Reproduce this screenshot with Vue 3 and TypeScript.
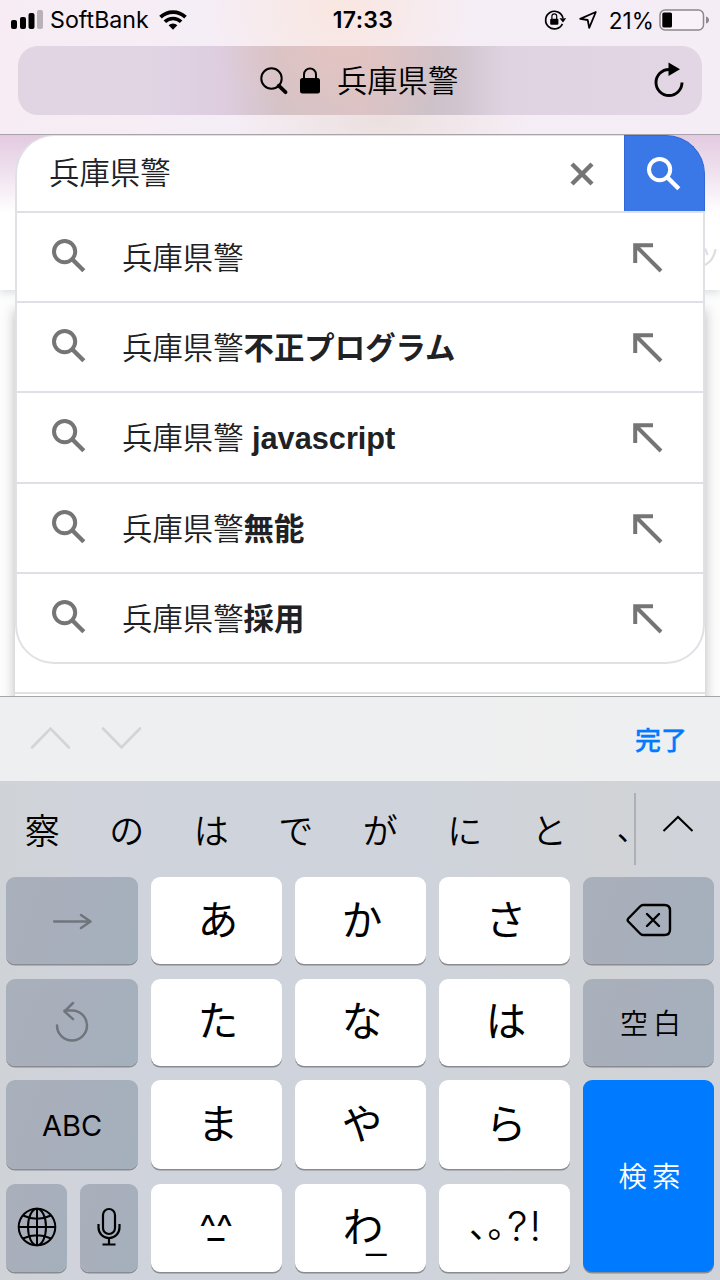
<script setup lang="ts">
interface Suggestion {
  base: string
  extra: string
  latin?: boolean
}

const query = '兵庫県警'

const suggestions: Suggestion[] = [
  { base: query, extra: '' },
  { base: query, extra: '不正プログラム' },
  { base: query + ' ', extra: 'javascript', latin: true },
  { base: query, extra: '無能' },
  { base: query, extra: '採用' },
]

const candidates: string[] = ['察', 'の', 'は', 'で', 'が', 'に', 'と']
</script>

<template>
  <div class="screen">
    <header class="browser">
      <div class="status">
        <div class="status-left">
          <svg class="signal" width="32" height="20" viewBox="0 0 32 20">
            <rect x="0" y="10" width="6" height="9" rx="2" />
            <rect x="9" y="7" width="6" height="12" rx="2" />
            <rect x="17.500" y="3" width="6" height="16" rx="2" />
            <rect x="26" y="0" width="6" height="19" rx="2" fill="#b8b1b8" />
          </svg>
          <span class="carrier">SoftBank</span>
          <svg class="wifi" width="28" height="20" viewBox="0 0 28 20">
            <g fill="none" stroke="#000" stroke-width="3.700">
              <path d="M1.500 7.100a18 18 0 0 1 25 0" />
              <path d="M5.900 11.800a11.600 11.600 0 0 1 16.200 0" />
            </g>
            <path d="M9.600 15.300a6.300 6.300 0 0 1 8.800 0L14 19.800z" />
          </svg>
        </div>
        <span class="clock">17:33</span>
        <div class="status-right">
          <svg width="23" height="22" viewBox="0 0 23 22">
            <path d="M18.400 14.900A8.800 8.800 0 1 1 19 9" fill="none" stroke="#000" stroke-width="1.700" />
            <path d="M15.500 9.300h6.700l-3.200 4.200z" />
            <rect x="6.200" y="9.700" width="8.200" height="6" rx="1" />
            <path d="M7.900 10V7.300a2.400 2.400 0 0 1 4.800 0V10" fill="none" stroke="#000" stroke-width="1.200" />
          </svg>
          <svg class="locate" width="20" height="20" viewBox="0 0 20 20">
            <path d="M17.800 2L2.200 8.800l7.500 1.200L11.200 17.800z" fill="none" stroke="#000" stroke-width="1.800" stroke-linejoin="round" />
          </svg>
          <span class="percent">21%</span>
          <svg class="battery" width="51" height="22" viewBox="0 0 51 22">
            <rect x="1" y="1" width="43.500" height="20" rx="5" fill="#f9f2f8" stroke="#8d888d" stroke-width="1.500" />
            <rect x="3.300" y="3.500" width="9.700" height="15" rx="1.500" />
            <path d="M47 7.500q3 1 3 3.500t-3 3.500z" fill="#8d888d" />
          </svg>
        </div>
      </div>
      <div class="address">
        <div class="address-main">
          <svg width="28" height="28" viewBox="0 0 28 28">
            <circle cx="11.500" cy="11.500" r="10.200" fill="none" stroke="#000" stroke-width="2" />
            <path d="M18.700 18.700l6.800 6.500" stroke="#000" stroke-width="3.700" stroke-linecap="round" />
          </svg>
          <svg class="lock" width="20" height="27" viewBox="0 0 20 27">
            <rect x="0" y="11" width="20" height="15.500" rx="2.500" />
            <path d="M4 12V7.500a6 6 0 0 1 12 0V12" fill="none" stroke="#000" stroke-width="2" />
          </svg>
          <span class="address-text">{{ query }}</span>
        </div>
        <svg class="reload" width="32" height="36" viewBox="0 0 32 36">
          <path d="M29 20.500A13 13 0 1 1 16 7.500" fill="none" stroke="#000" stroke-width="2.900" />
          <path d="M15.500 0.500v13.500L27 7.200z" />
        </svg>
      </div>
    </header>

    <main class="page">
      <div class="page-top"><span class="tab-fragment">ツ</span></div>
      <div class="page-card"></div>
      <section class="search">
        <div class="search-field">
          <span class="query">{{ query }}</span>
          <svg class="clear" width="24" height="24" viewBox="0 0 24 24">
            <path d="M2 2l20 20M22 2L2 22" stroke="#757575" stroke-width="4.400" />
          </svg>
          <div class="search-button">
            <svg width="34" height="34" viewBox="0 0 34 34" fill="none" stroke="#fff">
              <circle cx="12.600" cy="12.600" r="10.600" stroke-width="4" />
              <path d="M20.500 20.500l11.300 11.300" stroke-width="4.400" />
            </svg>
          </div>
        </div>
        <div v-for="(item, i) in suggestions" :key="i" class="suggestion">
          <svg class="glass" width="34" height="34" viewBox="0 0 34 34" fill="none" stroke="#757575">
            <circle cx="12.600" cy="12.600" r="10.600" stroke-width="4" />
            <path d="M20.500 20.500l11.300 11.300" stroke-width="4.400" />
          </svg>
          <span class="suggestion-text">{{ item.base }}<b :class="{ latin: item.latin }">{{ item.extra }}</b></span>
          <svg class="fill-arrow" width="30" height="30" viewBox="0 0 30 30">
            <path d="M20 2.200H2.200V20M3 3l25 25" fill="none" stroke="#757575" stroke-width="4" />
          </svg>
        </div>
      </section>
    </main>

    <div class="accessory">
      <svg width="112" height="24" viewBox="0 0 112 24" fill="none" stroke="#d3d4d6" stroke-width="2.600" stroke-linecap="round">
        <path d="M2 21.500L20.500 2.500L39 21.500M73 2.500l18.500 19L110 2.500" />
      </svg>
      <span class="done">完了</span>
    </div>

    <section class="keyboard">
      <div class="candidates">
        <div class="candidate-list">
          <span v-for="c in candidates" :key="c" class="candidate">{{ c }}</span>
          <span class="candidate comma">、</span>
        </div>
        <div class="expand">
          <svg width="32" height="18" viewBox="0 0 32 18">
            <path d="M1.500 16L16 2l14.500 14" fill="none" stroke="#000" stroke-width="2" />
          </svg>
        </div>
      </div>

      <div class="keys">
        <div class="key dark">
          <svg width="40" height="18" viewBox="0 0 40 18" fill="none" stroke="#70757c" stroke-width="2.500" stroke-linecap="round" stroke-linejoin="round">
            <path d="M1 9.500h36M28 3L37.500 9.500L28 16" />
          </svg>
        </div>
        <div class="key">あ</div>
        <div class="key">か</div>
        <div class="key">さ</div>
        <div class="key dark delete">
          <svg width="46" height="34" viewBox="0 0 46 34" fill="none" stroke="#000" stroke-width="2.400" stroke-linecap="round">
            <path d="M17 2H38.500Q44 2 44 7.500V26.500Q44 32 38.500 32H17Q15.500 32 14 30.500L2.300 18.500Q1 17 2.300 15.500L14 3.500Q15.500 2 17 2Z" />
            <path d="M21 11l12 12M33 11L21 23" />
          </svg>
        </div>

        <div class="key dark undo">
          <svg width="34" height="42" viewBox="0 0 34 42" fill="none" stroke="#70757c" stroke-width="2.500" stroke-linecap="round" stroke-linejoin="round">
            <path d="M2 24.500A15 15 0 1 0 17 9.500H9.500M18 2L9.500 10.300L18 18.200" />
          </svg>
        </div>
        <div class="key">た</div>
        <div class="key">な</div>
        <div class="key">は</div>
        <div class="key dark word">空白</div>

        <div class="key dark abc">ABC</div>
        <div class="key">ま</div>
        <div class="key">や</div>
        <div class="key">ら</div>
        <div class="key blue word">検索</div>

        <div class="pair">
          <div class="key dark globe">
            <svg width="40" height="40" viewBox="0 0 40 40" fill="none" stroke="#000" stroke-width="2">
              <circle cx="20" cy="20" r="18.300" />
              <ellipse cx="20" cy="20" rx="9" ry="18.300" />
              <path d="M20 1.700v36.600M1.700 20h36.600M6 8.500Q20 15 34 8.500M6 31.500Q20 25 34 31.500" />
            </svg>
          </div>
          <div class="key dark mic">
            <svg width="24" height="40" viewBox="0 0 24 40" fill="none" stroke="#000" stroke-width="2.200">
              <rect x="6" y="2" width="12" height="25" rx="6" />
              <path d="M1.500 17v3.500a10.500 10.500 0 0 0 21 0V17M12 31v6M5.500 37.500h13" />
            </svg>
          </div>
        </div>
        <div class="key face"><span>^^</span><i>_</i></div>
        <div class="key wa">わ<i>_</i></div>
        <div class="key marks"><span>、</span><span class="stop">。</span><span class="latin-marks">?!</span></div>
      </div>
    </section>
  </div>
</template>

<style>
body {
  margin: 0;
}
</style>

<style scoped>
.screen {
  width: 720px;
  height: 1280px;
  overflow: hidden;
  display: flex;
  flex-direction: column;
  font-family: "Liberation Sans", "Noto Sans CJK JP", sans-serif;
  color: #000;
}
svg {
  display: block;
  flex: none;
}
.browser {
  height: 135px;
  box-sizing: border-box;
  border-bottom: 1.500px solid #aaa4aa;
  background:
    radial-gradient(ellipse 130px 100px at 340px 10px, #f9e6e0 0%, rgba(249, 230, 224, 0) 100%),
    radial-gradient(ellipse 150px 70px at 380px 120px, #ece0df 0%, rgba(236, 224, 223, 0) 100%),
    linear-gradient(90deg, #f7ecf4, #f5eef6 40%, #f5edf5);
}
.status {
  height: 40px;
  display: grid;
  grid-template-columns: 1fr 80px 1fr;
  align-items: center;
  font-family: Inter, sans-serif;
}
.status-left,
.status-right {
  display: flex;
  align-items: center;
}
.status-left {
  padding-left: 11px;
}
.carrier {
  font-size: 23.200px;
  margin-left: 7px;
  width: 103px;
}
.wifi {
  margin-left: 6px;
  margin-bottom: 1px;
}
.clock {
  font-size: 23px;
  font-weight: 600;
  text-align: center;
  letter-spacing: 0.300px;
  padding-left: 6px;
}
.status-right {
  justify-content: flex-end;
  padding-right: 10px;
}
.locate {
  margin-left: 11px;
}
.percent {
  font-size: 22.600px;
  margin-left: 11px;
}
.battery {
  margin-left: 5px;
}
.address {
  height: 69px;
  margin: 6px 18px 0;
  border-radius: 20px;
  display: flex;
  align-items: center;
  background:
    radial-gradient(ellipse 130px 80px at 325px 0, rgba(228, 196, 193, 0.900), rgba(228, 196, 193, 0)),
    linear-gradient(90deg, #e1d5e3 0, #e1d5e4 130px, #ddcddf 205px, #d4c3c8 260px, #dbc3c6 340px, #cdc2ca 415px, #d0c5ce 440px, #dfd3e2 490px, #e3d6e4 100%);
}
.address-main {
  margin-left: 242px;
  display: flex;
  align-items: center;
}
.lock {
  margin-left: 12px;
}
.address-text {
  margin-left: 17px;
  font-size: 30.300px;
  line-height: 40px;
  font-weight: 350;
  padding-top: 2px;
}
.reload {
  margin-left: auto;
  margin-right: 17px;
  margin-bottom: 1px;
}
.page {
  height: 561px;
  position: relative;
  overflow: hidden;
  background: #fdfdfd;
}
.page-top {
  height: 155px;
  background: linear-gradient(#e3cae0 0, #f1e5f0 42px, #fff 78px);
  box-shadow: 0 2px 9px rgba(60, 70, 90, 0.200);
}
.tab-fragment {
  position: absolute;
  left: 695px;
  top: 107px;
  font-size: 24px;
  line-height: 32px;
  color: #ddd;
}
.page-card {
  position: absolute;
  left: 15px;
  top: 175px;
  width: 690px;
  height: 400px;
  background: linear-gradient(#fff 382px, #e0e1e3 382px, #e0e1e3 384px, #fff 384px);
  box-shadow: 0 0 12px rgba(0, 0, 0, 0.280);
}
.search {
  position: absolute;
  left: 15px;
  top: 0;
  width: 690px;
  height: 529px;
  box-sizing: border-box;
  border: solid #dfe1e5;
  border-width: 1px 2px 2px;
  border-radius: 39px;
  background: #fff;
}
.search-field {
  height: 75px;
  display: flex;
  align-items: center;
}
.query {
  margin-left: 32px;
  font-size: 30.400px;
  line-height: 40px;
  font-weight: 350;
  color: #202124;
  padding-bottom: 1px;
}
.clear {
  margin-left: auto;
  margin-right: 30px;
}
.search-button {
  width: 81px;
  height: 76px;
  margin: -1px -2px 0 0;
  box-sizing: border-box;
  border: 1.500px solid #3367d6;
  border-bottom: 0;
  border-radius: 0 39px 0 0;
  background: #3b78e7;
  display: flex;
  align-items: center;
  justify-content: center;
  padding-right: 2px;
}
.suggestion {
  height: 90.200px;
  box-sizing: border-box;
  border-top: 2px solid #dfe0e5;
  display: flex;
  align-items: center;
  color: #202124;
}
.glass {
  margin-left: 35px;
  margin-bottom: 2px;
}
.suggestion-text {
  margin-left: 36px;
  font-size: 30.400px;
  line-height: 40px;
  font-weight: 350;
  white-space: pre;
  padding-top: 2px;
}
.suggestion-text b {
  font-weight: 700;
}
.suggestion-text .latin {
  font-size: 30.700px;
}
.fill-arrow {
  margin-left: auto;
  margin-right: 40px;
  margin-top: 2px;
}
.accessory {
  height: 85px;
  box-sizing: border-box;
  border-top: 1.500px solid #a4a7a8;
  background: linear-gradient(90deg, #eeeff1 60%, #efefef 75%, #eeeff1 90%);
  display: flex;
  align-items: center;
  justify-content: space-between;
  padding: 0 33px 2px 30px;
}
.done {
  font-size: 26px;
  line-height: 36px;
  font-weight: 500;
  color: #007aff;
  padding-top: 6px;
  -webkit-text-stroke: 0.300px #007aff;
}
.keyboard {
  flex: 1;
  background: linear-gradient(90deg, #cfd3d7, #d0d3db 10%, #cfd3db 60%, #d1d3d6 85%, #d0d3db);
}
.candidates {
  height: 96px;
  display: flex;
}
.candidate-list {
  width: 634px;
  display: flex;
}
.candidate {
  flex: 0 0 84.500px;
  font-size: 35px;
  line-height: 101px;
  font-weight: 350;
  text-align: center;
}
.comma {
  flex-basis: 40px;
  text-align: right;
  font-size: 29px;
  line-height: 95px;
  font-weight: 400;
  font-feature-settings: "halt";
  font-family: "Noto Sans CJK JP", sans-serif;
}
.expand {
  flex: 1;
  height: 72px;
  margin: 12px 0 0 auto;
  border-left: 2px solid #aeb0b5;
  display: flex;
  justify-content: center;
  padding-top: 22px;
  box-sizing: border-box;
}
.keys {
  display: grid;
  grid-template-columns: 132px repeat(4, 131px);
  grid-template-rows: 87px 87px 89px 88px;
  gap: 14.670px 13px;
  padding: 0 6px;
}
.key {
  border-radius: 9px;
  background: #fff;
  box-shadow: 0 1.600px 0 #898b90;
  display: flex;
  align-items: center;
  justify-content: center;
  position: relative;
  font-size: 40.500px;
  padding-left: 3px;
  box-sizing: border-box;
  line-height: 50px;
}
.dark {
  background: linear-gradient(110deg, #a8b0bb, #a8afbc 50%, #a4b0bd);
  padding-left: 1px;
}
.delete {
  padding: 0 0 1px 1px;
}
.undo {
  padding: 0;
}
.word {
  font-size: 28px;
  font-weight: 350;
  letter-spacing: 5px;
  padding: 5px 0 0 9px;
}
.blue {
  grid-row: span 2;
  background: #007aff;
  color: #fff;
  font-size: 28.500px;
  padding: 2px 0 0 7px;
}
.abc {
  font-family: Inter, sans-serif;
  font-size: 29px;
  padding: 3px 0 0;
}
.pair {
  display: grid;
  grid-template-columns: 61px 58px;
  gap: 13px;
}
.pair .key {
  padding: 0 0 2px;
}
.face {
  font-family: Inter, sans-serif;
  font-size: 36px;
  flex-direction: column;
  justify-content: flex-start;
  padding: 30px 1px 0 0;
}
.face span {
  line-height: 26px;
  letter-spacing: -0.200px;
}
.face i,
.wa i {
  font-style: normal;
}
.face i {
  line-height: 10px;
  font-size: 37px;
  margin-top: -20px;
}
.wa {
  padding-left: 8px;
}
.wa i {
  font-size: 36px;
  margin: 19px 0 0 -17px;
}
.marks {
  font-family: "Noto Sans CJK JP", sans-serif;
  font-feature-settings: "halt";
  font-size: 35px;
  justify-content: flex-start;
  padding: 0 0 9px 30px;
}
.stop {
  margin-left: 1px;
}
.latin-marks {
  font-family: Inter, sans-serif;
  font-size: 41px;
  font-weight: 300;
  letter-spacing: 2px;
  padding: 5px 0 0 2px;
}
</style>
